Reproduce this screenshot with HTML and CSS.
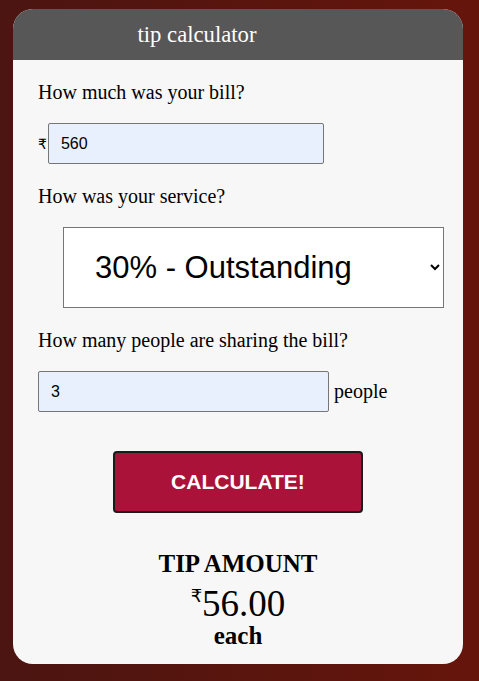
FILE: index.html
```html
<!DOCTYPE html>
<html lang="en">
<head>
    <meta charset="UTF-8">
    <meta name="viewport" content="width=device-width, initial-scale=1.0">
    <title>Tip Calculator</title>
    <link rel="stylesheet" href="styles.css">
</head>
<body>
    <div class="container">
        <div class="header">
            <h1>tip calculator</h1>
        </div>
        <form id="calculator">
            <p class="question">How much was your bill?</p>
            <div class="row">
                <span class="currency">₹</span>
                <input type="text" id="billamt" class="bill-input" value="560">
            </div>
            <p class="question">How was your service?</p>
            <div class="row">
                <select id="serviceQual" class="service">
                    <option value="0.3">30% - Outstanding</option>
                    <option value="0.2">20% - Good</option>
                    <option value="0.15">15% - It was OK</option>
                    <option value="0.1">10% - Bad</option>
                    <option value="0.05">5% - Terrible</option>
                </select>
            </div>
            <p class="question">How many people are sharing the bill?</p>
            <div class="row">
                <input type="text" id="peopleamt" class="people-input" value="3">
                <span class="people-label">people</span>
            </div>
            <button type="button" id="calculate">CALCULATE!</button>
        </form>
        <div id="totalTip">
            <sup>TIP AMOUNT</sup>
            <div class="amount"><span class="rupee">₹</span><span id="tip">56.00</span></div>
            <small id="each">each</small>
        </div>
    </div>

    <script>
        document.getElementById('calculate').addEventListener('click', () => {
            const bill = parseFloat(document.getElementById('billamt').value);
            const service = parseFloat(document.getElementById('serviceQual').value);
            let people = parseInt(document.getElementById('peopleamt').value, 10);

            if (isNaN(bill)) {
                return;
            }
            if (isNaN(people) || people < 1) {
                people = 1;
            }

            const total = (bill * service) / people;
            document.getElementById('tip').textContent = total.toFixed(2);
            document.getElementById('each').style.display = people === 1 ? 'none' : 'block';
        });
    </script>
</body>
</html>
```

FILE: styles.css
```css
html {
    height: 100%;
}

body {
    margin: 0;
    padding: 9px 16px 17px 13px;
    min-height: 100%;
    box-sizing: border-box;
    background: linear-gradient(to right, #4b1511, #66150b);
    font-family: "Liberation Serif", "DejaVu Serif", serif;
}

.container {
    background-color: #f7f7f7;
    border-radius: 20px;
    overflow: hidden;
    height: 655px;
}

.header {
    background-color: #575757;
    height: 51px;
    display: flex;
    align-items: center;
    justify-content: center;
    padding-right: 82px;
}

h1 {
    margin: 0;
    color: #ffffff;
    font-size: 22.7px;
    font-weight: normal;
}

#calculator {
    padding: 0 25px;
}

.question {
    margin: 0;
    padding-top: 20.5px;
    font-size: 20px;
    color: #000000;
}

.row {
    display: flex;
    align-items: center;
    margin-top: 19.5px;
}

.currency {
    font-family: "DejaVu Sans", sans-serif;
    font-size: 14px;
    margin-right: 1px;
}

input[type="text"] {
    height: 41px;
    box-sizing: border-box;
    padding: 0 12px;
    background-color: #e8f0fe;
    border: 1px solid #767676;
    border-radius: 2px;
    font-family: "Liberation Sans", Arial, sans-serif;
    font-size: 16px;
    color: #000000;
}

.bill-input {
    width: 276px;
}

.people-input {
    width: 291px;
}

.people-label {
    margin-left: 5px;
    font-size: 20px;
}

.service {
    flex-shrink: 0;
    margin-left: 25px;
    width: 381px;
    height: 81px;
    padding-left: 27px;
    background-color: #ffffff;
    border: 1px solid #767676;
    border-radius: 0;
    font-family: "Liberation Sans", Arial, sans-serif;
    font-size: 31px;
    color: #000000;
}

button {
    display: block;
    margin: 39px auto 0;
    width: 250px;
    height: 62px;
    background-color: #ab1239;
    color: #ffffff;
    border: 2px solid #1b1b1b;
    border-radius: 4px;
    font-family: "Liberation Sans", Arial, sans-serif;
    font-size: 21px;
    font-weight: bold;
    cursor: pointer;
}

button:hover {
    background-color: #c0163f;
}

#totalTip {
    margin-top: 38px;
    text-align: center;
    color: #000000;
}

#totalTip sup {
    display: block;
    font-size: 25px;
    font-weight: bold;
    vertical-align: baseline;
    line-height: 26px;
}

.amount {
    font-size: 37px;
    line-height: 37px;
}

.rupee {
    font-family: "DejaVu Sans", sans-serif;
    font-size: 18px;
    vertical-align: 14px;
}

#each {
    display: block;
    font-size: 25px;
    font-weight: bold;
    line-height: 28px;
}
```
